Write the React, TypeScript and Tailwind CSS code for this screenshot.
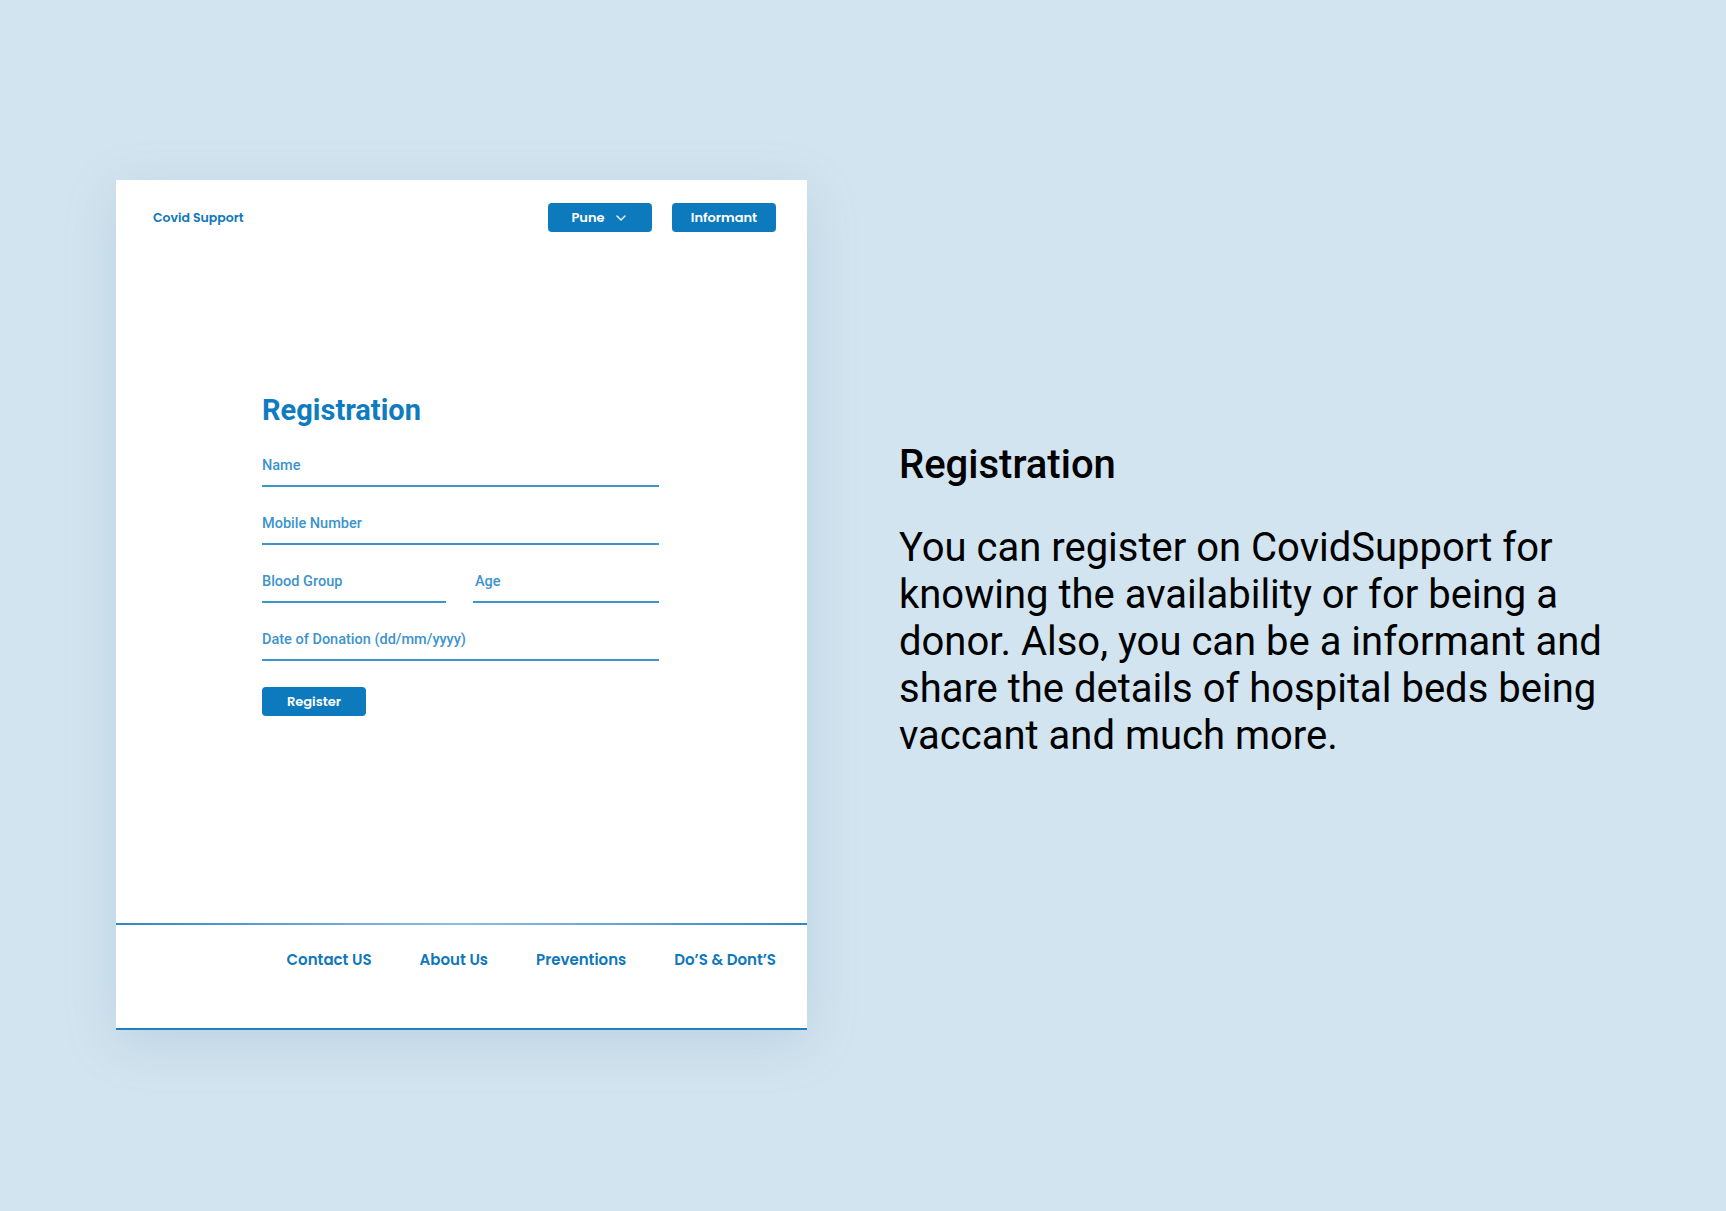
import { ChevronDown } from "lucide-react";

const fields = [
  { id: "name", label: "Name" },
  { id: "mobile", label: "Mobile Number" },
];

const footerLinks = ["Contact US", "About Us", "Preventions", "Do’S & Dont’S"];

const poppins = "font-['Poppins','Inter','Open_Sans',sans-serif]";

function Field({ label, className = "" }: { label: string; className?: string }) {
  return (
    <div className={`border-b-2 border-[#3d95cc] pb-[8px] pt-[3px] ${className}`}>
      <span className="text-[14.5px] font-medium text-[#3b94cd]">{label}</span>
    </div>
  );
}

export default function App() {
  return (
    <div className="min-h-[1211px] w-full bg-[#d2e4ef] font-['Roboto',sans-serif]">
      <div className="flex items-start pl-[116px] pt-[180px]">
        {/* mockup card */}
        <div className="flex h-[850px] w-[691px] shrink-0 flex-col bg-white shadow-[0_12px_48px_rgba(110,150,180,0.22)]">
          <header className="flex items-center justify-between pl-[37px] pr-[31px] pt-[23px]">
            <span className={`${poppins} pt-[2px] text-[12.5px] font-semibold text-[#0f78bb]`}>Covid Support</span>
            <div className="flex gap-[20px]">
              <button className={`${poppins} flex h-[29px] w-[104px] items-center justify-center gap-[8px] rounded-[4px] bg-[#0d7abd] text-[13px] font-semibold text-white`}>
                Pune
                <ChevronDown className="h-[16px] w-[16px]" strokeWidth={2} />
              </button>
              <button className={`${poppins} flex h-[29px] w-[104px] items-center justify-center rounded-[4px] bg-[#0d7abd] text-[13px] font-semibold text-white`}>
                Informant
              </button>
            </div>
          </header>

          <main className="ml-[146px] mt-[160px] w-[397px]">
            <h1 className="text-[29px] font-bold leading-[36px] text-[#0f7bc0]">Registration</h1>
            <div className="mt-[22px] flex flex-col gap-[21px]">
              {fields.map((f) => (
                <Field key={f.id} label={f.label} />
              ))}
              <div className="flex gap-[27px]">
                <Field label="Blood Group" className="flex-1" />
                <Field label="Age" className="flex-1 pl-[2px]" />
              </div>
              <Field label="Date of Donation (dd/mm/yyyy)" />
            </div>
            <button className={`${poppins} mt-[26px] h-[29px] w-[104px] rounded-[4px] bg-[#0d7abd] text-[13px] font-semibold text-white`}>
              Register
            </button>
          </main>

          <footer className="mt-auto">
            <div className="h-[2px] bg-gradient-to-r from-[#2d88c6] via-[#8cbfe0] to-[#2d88c6]" />
            <nav className="flex h-[103px] items-start justify-end gap-[48px] pr-[31px] pt-[24px]">
              {footerLinks.map((l) => (
                <a key={l} className={`${poppins} text-[15px] font-semibold text-[#0f78bb]`}>
                  {l}
                </a>
              ))}
            </nav>
            <div className="h-[2px] bg-[#1f7fbf]" />
          </footer>
        </div>

        {/* description */}
        <div className="ml-[92px] mt-[261px] w-[712px] text-black">
          <h2 className="text-[40px] font-medium leading-[48px]">Registration</h2>
          <p className="mt-[35px] text-[40px] leading-[47px]">
            You can register on CovidSupport for knowing the availability or for being a donor. Also, you can be a
            informant and share the details of hospital beds being vaccant and much more.
          </p>
        </div>
      </div>
    </div>
  );
}
